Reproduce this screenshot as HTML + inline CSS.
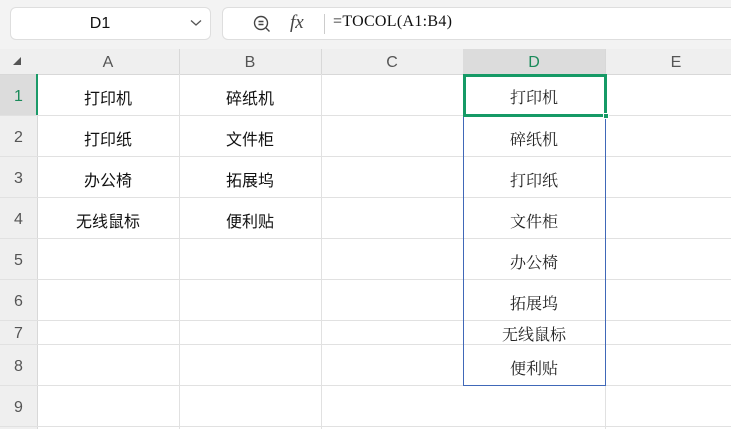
<!DOCTYPE html>
<html><head><meta charset="utf-8"><style>
*{margin:0;padding:0;box-sizing:border-box}
body{width:731px;height:429px;overflow:hidden;background:#fff;position:relative;font-family:"Liberation Sans","Noto Sans CJK SC",sans-serif}
.a{position:absolute}
.hl{position:absolute;height:1px;background:#e1e1e1}
.vl{position:absolute;width:1px;background:#e1e1e1}
.c{position:absolute;text-align:center;font-size:16px;color:#111;font-family:"Liberation Sans","Noto Sans CJK SC",sans-serif;padding-top:5px}
.s{font-family:"Liberation Serif","Noto Serif CJK SC",serif;color:#222;padding-top:3px}
.rh{position:absolute;left:0;width:37px;text-align:center;font-size:16px;color:#555;padding-top:2px}
.ch{position:absolute;top:49px;height:25px;line-height:25px;text-align:center;font-size:16px;color:#555;padding-top:1px}
</style></head><body>
<div class="a" style="left:0;top:0;width:731px;height:49px;background:#f3f3f3"></div>
<div class="a" style="left:10px;top:7px;width:201px;height:33px;background:#fff;border:1px solid #dedede;border-radius:6px"></div>
<div class="a" style="left:10px;top:7px;width:180px;height:33px;line-height:33px;text-align:center;font-size:16px;color:#111">D1</div>
<svg class="a" style="left:190px;top:19px" width="12" height="8"><path d="M1 1.5 L6 6 L11 1.5" stroke="#555" stroke-width="1.3" fill="none"/></svg>
<div class="a" style="left:222px;top:7px;width:520px;height:33px;background:#fff;border:1px solid #dedede;border-radius:6px"></div>
<svg class="a" style="left:252px;top:14px" width="20" height="20"><circle cx="9" cy="9" r="6.5" stroke="#444" stroke-width="1.4" fill="none"/><path d="M6.5 7.5h5M6.5 10.5h5M14 14l3.5 3.5" stroke="#444" stroke-width="1.4"/></svg>
<div class="a" style="left:290px;top:12px;font-family:'Liberation Serif',serif;font-style:italic;font-size:19px;color:#444">fx</div>
<div class="a" style="left:324px;top:14px;width:1px;height:20px;background:#ccc"></div>
<div class="a" style="left:333px;top:13px;font-family:'Liberation Serif','Noto Serif CJK SC',serif;font-size:16px;letter-spacing:0.3px;color:#111">=TOCOL(A1:B4)</div>
<div class="a" style="left:0;top:49px;width:731px;height:25px;background:#efefef"></div>
<div class="a" style="left:463px;top:49px;width:142px;height:25px;background:#dcdcdc"></div>
<div class="a" style="left:0;top:74px;width:37px;height:355px;background:#efefef"></div>
<div class="a" style="left:0;top:74px;width:37px;height:41px;background:#dcdcdc"></div>
<svg class="a" style="left:13px;top:57px" width="8" height="8"><path d="M8 0V8H0Z" fill="#555"/></svg>
<div class="vl" style="left:179px;top:49px;height:25px;background:#d8d8d8"></div>
<div class="vl" style="left:321px;top:49px;height:25px;background:#d8d8d8"></div>
<div class="vl" style="left:605px;top:49px;height:25px;background:#d8d8d8"></div>
<div class="hl" style="left:0;top:74px;width:731px;background:#d8d8d8"></div>
<div class="vl" style="left:37px;top:74px;height:355px;background:#d8d8d8"></div>
<div class="vl" style="left:179px;top:74px;height:355px"></div>
<div class="vl" style="left:321px;top:74px;height:355px"></div>
<div class="vl" style="left:605px;top:74px;height:355px"></div>
<div class="hl" style="left:0;top:115px;width:731px"></div>
<div class="hl" style="left:0;top:156px;width:731px"></div>
<div class="hl" style="left:0;top:197px;width:731px"></div>
<div class="hl" style="left:0;top:238px;width:731px"></div>
<div class="hl" style="left:0;top:279px;width:731px"></div>
<div class="hl" style="left:0;top:320px;width:731px"></div>
<div class="hl" style="left:0;top:344px;width:731px"></div>
<div class="hl" style="left:0;top:385px;width:731px"></div>
<div class="hl" style="left:0;top:426px;width:731px"></div>
<div class="ch" style="left:37px;width:142px">A</div>
<div class="ch" style="left:179px;width:142px">B</div>
<div class="ch" style="left:321px;width:142px">C</div>
<div class="ch" style="left:463px;width:142px;color:#1a8a5a">D</div>
<div class="ch" style="left:605px;width:142px">E</div>
<div class="rh" style="top:74px;line-height:41px;color:#1a8a5a">1</div>
<div class="rh" style="top:115px;line-height:41px">2</div>
<div class="rh" style="top:156px;line-height:41px">3</div>
<div class="rh" style="top:197px;line-height:41px">4</div>
<div class="rh" style="top:238px;line-height:41px">5</div>
<div class="rh" style="top:279px;line-height:41px">6</div>
<div class="rh" style="top:320px;line-height:24px">7</div>
<div class="rh" style="top:344px;line-height:41px">8</div>
<div class="rh" style="top:385px;line-height:41px">9</div>
<div class="a" style="left:36px;top:74px;width:2px;height:41px;background:#1a9a68"></div>
<div class="c" style="left:37px;top:74px;width:142px;line-height:41px">打印机</div>
<div class="c" style="left:37px;top:115px;width:142px;line-height:41px">打印纸</div>
<div class="c" style="left:37px;top:156px;width:142px;line-height:41px">办公椅</div>
<div class="c" style="left:37px;top:197px;width:142px;line-height:41px">无线鼠标</div>
<div class="c" style="left:179px;top:74px;width:142px;line-height:41px">碎纸机</div>
<div class="c" style="left:179px;top:115px;width:142px;line-height:41px">文件柜</div>
<div class="c" style="left:179px;top:156px;width:142px;line-height:41px">拓展坞</div>
<div class="c" style="left:179px;top:197px;width:142px;line-height:41px">便利贴</div>
<div class="a" style="left:463px;top:74px;width:143px;height:312px;border:1px solid #4068b8"></div>
<div class="c s" style="left:463px;top:74px;width:142px;line-height:43px">打印机</div>
<div class="c s" style="left:463px;top:115px;width:142px;line-height:45px">碎纸机</div>
<div class="c s" style="left:463px;top:156px;width:142px;line-height:45px">打印纸</div>
<div class="c s" style="left:463px;top:197px;width:142px;line-height:45px">文件柜</div>
<div class="c s" style="left:463px;top:238px;width:142px;line-height:45px">办公椅</div>
<div class="c s" style="left:463px;top:279px;width:142px;line-height:45px">拓展坞</div>
<div class="c s" style="left:463px;top:320px;width:142px;line-height:26px">无线鼠标</div>
<div class="c s" style="left:463px;top:344px;width:142px;line-height:45px">便利贴</div>
<div class="a" style="left:463px;top:74px;width:144px;height:43px;border:3px solid #169a66"></div>
<div class="a" style="left:603px;top:113px;width:6px;height:6px;background:#169a66;border:1px solid #fff"></div>
</body></html>
